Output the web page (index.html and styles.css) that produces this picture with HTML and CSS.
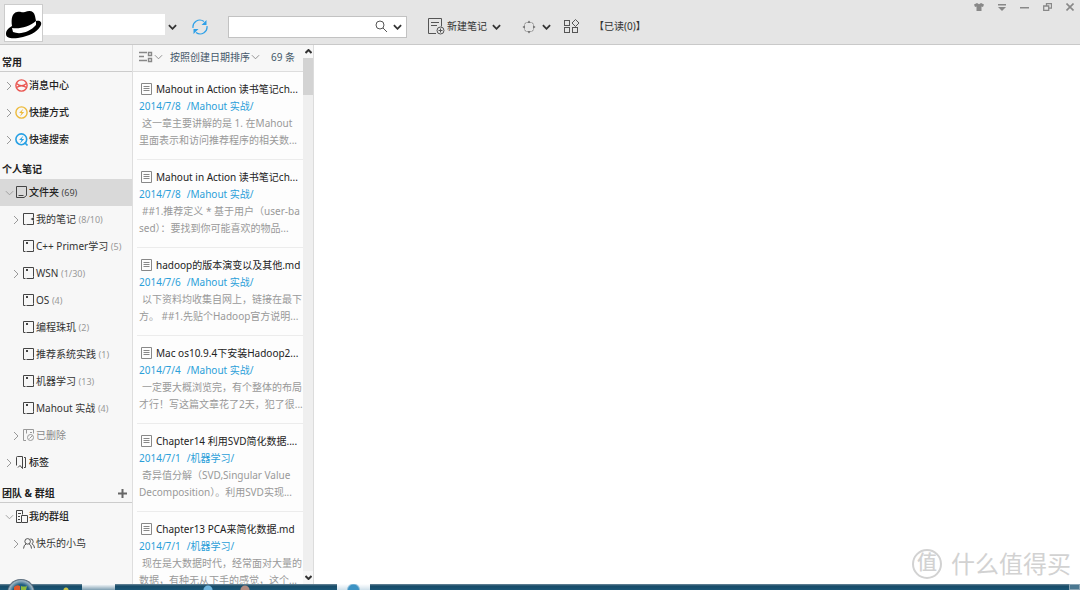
FILE: index.html
```html
<!DOCTYPE html>
<html lang="zh-CN">
<head>
<meta charset="utf-8">
<title>笔记</title>
<link rel="stylesheet" href="styles.css">
</head>
<body>
<svg class="sprite" aria-hidden="true">
  <symbol id="right" viewBox="0 0 6 10"><path d="M1 1l4 4-4 4"/></symbol>
  <symbol id="down" viewBox="0 0 10 6"><path d="M1 1l4 4 4-4"/></symbol>
  <symbol id="note" viewBox="0 0 12 13"><path d="M2.500 11.500H.5V.5h10v9M3.500 11.500h7v-2"/><path d="M3 2h2v2H3z" fill="#444" stroke="none"/></symbol>
  <symbol id="doc" viewBox="0 0 11 12"><path d="M.5.500h10v11H.5zM2.500 3.500h6M2.500 5.500h6M2.500 7.500h6"/></symbol>
</svg>
<div class="app">
  <header class="topbar">
    <div class="avatar">
      <svg width="36" height="36" viewBox="0 0 36 36"><path d="M6 20C5 13 6 7 11 6c4-1 4 1 8 0 5-2 9-1 10 4l1 5c4-1 6 1 5 4-2 5-9 10-18 12C8 33 0 33 0 28c0-4 3-6 6-8z" fill="#000"/><path d="M6 22c8 1 17-1 24-7v4c-6 7-16 10-23 7z" fill="#fff"/></svg>
    </div>
    <div class="username"></div>
    <button class="btn user-menu" aria-label="账户"><svg class="ico dark" width="9" height="6"><use href="#down"/></svg></button>
    <button class="btn sync" aria-label="同步">
      <svg width="16" height="16" viewBox="0 0 16 16" fill="none" stroke="#2ea0e8" stroke-width="1.200"><path d="M1 9a7 7 0 0 1 3-6.700A7 7 0 0 1 12 2.500M15 7a7 7 0 0 1-3 6.700A7 7 0 0 1 4 13.500"/><path d="M9.500 6h5V1zM6.500 10h-5v5z" fill="#2ea0e8" stroke="none"/></svg>
    </button>
    <form class="search">
      <input type="text" aria-label="搜索笔记">
      <button class="btn" type="button" aria-label="搜索"><svg class="ico mid" width="13" height="13" viewBox="0 0 13 13"><circle cx="5" cy="5" r="4"/><path d="M8 8l4 4"/></svg></button>
      <button class="btn" type="button" aria-label="搜索选项"><svg class="ico dark" width="9" height="6"><use href="#down"/></svg></button>
    </form>
    <button class="btn new-note">
      <svg class="ico mid" width="17" height="17" viewBox="0 0 17 17"><path d="M8 15.500H.5V.5h13v8M3 4.500h8M3 7.500h6"/><circle cx="12.500" cy="12.500" r="3.500"/><path d="M12.500 10.500v4M10.500 12.500h4"/></svg>
      <span>新建笔记</span>
      <svg class="ico dark caret" width="9" height="6"><use href="#down"/></svg>
    </button>
    <button class="btn focus" aria-label="视图">
      <svg class="ico gray" width="14" height="14" viewBox="0 0 14 14"><path d="M5 3L7 .5 9 3zM5 11l2 2.500L9 11zM3 5L.5 7 3 9zM11 5l2.500 2L11 9z" fill="#777" stroke="none"/><path d="M2.500 4.500q.5-1.500 2-2M9.500 2.500q1.500.5 2 2M2.500 9.500q.5 1.500 2 2M11.500 9.500q-.5 1.500-2 2"/></svg>
      <svg class="ico dark" width="9" height="6"><use href="#down"/></svg>
    </button>
    <button class="btn apps" aria-label="应用">
      <svg class="ico mid" width="16" height="15" viewBox="0 0 16 15"><rect x=".5" y="1.500" width="5" height="5"/><rect x=".5" y="8.500" width="5" height="5"/><rect x="8.500" y="8.500" width="5" height="5"/><path d="M11.500.500l3.500 3.500-3.500 3.500L8 4z"/></svg>
    </button>
    <button class="btn read">【已读(0)】</button>
    <div class="window-controls">
      <button class="btn" aria-label="皮肤"><svg width="10" height="8" viewBox="0 0 10 8"><path d="M0 1.500L3 0l2 1.200L7 0l3 1.500-1 2.500-1.500-.5V8h-5V3.500L1 4z" fill="#888"/></svg></button>
      <button class="btn" aria-label="菜单"><svg width="8" height="7" viewBox="0 0 8 7"><path d="M0 0h8v1.500H0zM0 3h8L4 7z" fill="#888"/></svg></button>
      <button class="btn" aria-label="最小化"><svg width="9" height="7" viewBox="0 0 9 7"><path d="M0 3h9v1.500H0z" fill="#888"/></svg></button>
      <button class="btn" aria-label="还原"><svg width="9" height="8" viewBox="0 0 9 8" fill="none" stroke="#888" stroke-width="1.300"><path d="M3.500 2.500V.7h5v4.500H6M.7 3h5v4.300h-5z"/></svg></button>
      <button class="btn" aria-label="关闭"><svg width="8" height="8" viewBox="0 0 8 8" stroke="#888" stroke-width="1.600"><path d="M.5.500l7 7M7.500.500l-7 7"/></svg></button>
    </div>
  </header>

  <div class="body">
    <nav class="sidebar">
      <h2 class="group ruled">常用</h2>
      <a class="row strong" href="#"><svg class="ico arrow"><use href="#right"/></svg><svg class="badge" viewBox="0 0 13 13" fill="none" stroke="#ea5550" stroke-width="1.400"><circle cx="6.500" cy="6.500" r="5.600"/><path d="M1.500 4.500q5 4.500 10 0M1.500 8.500q5-3.500 10 0"/></svg><span>消息中心</span></a>
      <a class="row strong" href="#"><svg class="ico arrow"><use href="#right"/></svg><svg class="badge" viewBox="0 0 13 13" fill="none" stroke="#edba3b" stroke-width="1.400"><circle cx="6.500" cy="6.500" r="5.600"/><path d="M8.500 2.500L4 7h2.500l-1.500 3.500L9.200 6H6.700z" fill="#edba3b" stroke="none"/></svg><span>快捷方式</span></a>
      <a class="row strong" href="#"><svg class="ico arrow"><use href="#right"/></svg><svg class="badge" viewBox="0 0 13 13" fill="none" stroke="#27a0e4" stroke-width="1.600"><circle cx="6.300" cy="6.300" r="5.400"/><path d="M9.500 9.500l3 3"/><path d="M8.500 2.500L4 7h2.500l-1.500 3.500L9.200 6H6.700z" fill="#27a0e4" stroke="none"/></svg><span>快速搜索</span></a>
      <h2 class="group">个人笔记</h2>
      <a class="row strong selected" href="#"><svg class="ico fold"><use href="#down"/></svg><svg class="ico badge" viewBox="0 0 13 13"><path d="M1.500.500h10v9l-2.500 2H1.500zM3.500 9.500h5"/></svg><span>文件夹 <small>(69)</small></span></a>
      <a class="row child" href="#"><svg class="ico arrow"><use href="#right"/></svg><svg class="ico folder" viewBox="0 0 12 13"><path d="M10.500 4V.5H.5v11h2M3.500 11.500h7V8"/><path d="M11 4v4L7.500 6z" fill="#444" stroke="none"/></svg><span>我的笔记 <small>(8/10)</small></span></a>
      <a class="row child leaf" href="#"><svg class="ico folder"><use href="#note"/></svg><span>C++ Primer学习 <small>(5)</small></span></a>
      <a class="row child" href="#"><svg class="ico arrow"><use href="#right"/></svg><svg class="ico folder"><use href="#note"/></svg><span>WSN <small>(1/30)</small></span></a>
      <a class="row child leaf" href="#"><svg class="ico folder"><use href="#note"/></svg><span>OS <small>(4)</small></span></a>
      <a class="row child leaf" href="#"><svg class="ico folder"><use href="#note"/></svg><span>编程珠玑 <small>(2)</small></span></a>
      <a class="row child leaf" href="#"><svg class="ico folder"><use href="#note"/></svg><span>推荐系统实践 <small>(1)</small></span></a>
      <a class="row child leaf" href="#"><svg class="ico folder"><use href="#note"/></svg><span>机器学习 <small>(13)</small></span></a>
      <a class="row child leaf" href="#"><svg class="ico folder"><use href="#note"/></svg><span>Mahout 实战 <small>(4)</small></span></a>
      <a class="row child muted" href="#"><svg class="ico arrow"><use href="#right"/></svg><svg class="ico folder" viewBox="0 0 12 13"><path d="M3 11.500H.5V.5h10v4M3.500 1v3.500M7 3.500h2"/><circle cx="7.500" cy="8.500" r="3"/><path d="M6.500 9.500l3-3"/></svg><span>已删除</span></a>
      <a class="row strong" href="#"><svg class="ico arrow"><use href="#right"/></svg><svg class="ico badge" viewBox="0 0 13 13"><path d="M1.500 9.500v-8q0-1 1-1h5v12L5 9.500l-2 2M9 1.500h1.500v10H9"/></svg><span>标签</span></a>
      <h2 class="group ruled">团队 &amp; 群组<button class="btn add" aria-label="添加群组"><svg width="9" height="9" viewBox="0 0 9 9" stroke="#666" stroke-width="2"><path d="M4.500 0v9M0 4.500h9"/></svg></button></h2>
      <a class="row strong" href="#"><svg class="ico fold"><use href="#down"/></svg><svg class="ico badge" viewBox="0 0 13 13"><path d="M6 12.500H1.500V.5h6v4M3 3.500h3M3 6.500h2M3 9.500h2M6.500 5.500h6v7h-6z"/></svg><span>我的群组</span></a>
      <a class="row child" href="#"><svg class="ico arrow"><use href="#right"/></svg><svg class="ico folder person" viewBox="0 0 13 12"><circle cx="5" cy="3.700" r="3"/><path d="M.6 11.500q.2-4 2.800-5M9.200 11.500q0-4-2.600-5M8 1q3 0 3 2.800 0 1.700-1.300 2.500 2.500 1 2.800 4.700"/></svg><span>快乐的小鸟</span></a>
    </nav>

    <section class="notes">
      <div class="list">
        <div class="sortbar">
          <button class="btn" aria-label="列表样式"><svg class="ico gray layout" width="14" height="12" viewBox="0 0 14 12"><path d="M0 1.500h8M0 5.500h5M0 9.500h8M9.500 1.500h3v3h-3zM9.500 7.500h3v3h-3z"/></svg><svg class="ico gray" width="9" height="6"><use href="#down"/></svg></button>
          <button class="btn sort">按照创建日期排序<svg class="ico gray" width="9" height="6"><use href="#down"/></svg></button>
          <span class="count">69 条</span>
        </div>
        <div class="items">
          <article class="item"><h3><svg class="ico gray"><use href="#doc"/></svg>Mahout in Action 读书笔记ch...</h3><p class="meta"><time>2014/7/8</time><a href="#">/Mahout 实战/</a></p><p class="text">这一章主要讲解的是 1. 在Mahout<br>里面表示和访问推荐程序的相关数...</p></article>
          <article class="item"><h3><svg class="ico gray"><use href="#doc"/></svg>Mahout in Action 读书笔记ch...</h3><p class="meta"><time>2014/7/8</time><a href="#">/Mahout 实战/</a></p><p class="text">##1.推荐定义 * 基于用户（user-ba<br>sed）：要找到你可能喜欢的物品...</p></article>
          <article class="item"><h3><svg class="ico gray"><use href="#doc"/></svg>hadoop的版本演变以及其他.md</h3><p class="meta"><time>2014/7/6</time><a href="#">/Mahout 实战/</a></p><p class="text">以下资料均收集自网上，链接在最下<br>方。 ##1.先贴个Hadoop官方说明...</p></article>
          <article class="item"><h3><svg class="ico gray"><use href="#doc"/></svg>Mac os10.9.4下安装Hadoop2...</h3><p class="meta"><time>2014/7/4</time><a href="#">/Mahout 实战/</a></p><p class="text">一定要大概浏览完，有个整体的布局<br>才行！写这篇文章花了2天，犯了很...</p></article>
          <article class="item"><h3><svg class="ico gray"><use href="#doc"/></svg>Chapter14 利用SVD简化数据....</h3><p class="meta"><time>2014/7/1</time><a href="#">/机器学习/</a></p><p class="text">奇异值分解（SVD,Singular Value<br>Decomposition）。利用SVD实现...</p></article>
          <article class="item"><h3><svg class="ico gray"><use href="#doc"/></svg>Chapter13 PCA来简化数据.md</h3><p class="meta"><time>2014/7/1</time><a href="#">/机器学习/</a></p><p class="text">现在是大数据时代，经常面对大量的<br>数据，有种无从下手的感觉，这个...</p></article>
        </div>
      </div>
      <div class="scrollbar">
        <button class="btn" aria-label="向上滚动"><svg class="ico dark" width="7" height="5" viewBox="0 0 7 5"><path d="M.5 4l3-3 3 3"/></svg></button>
        <div class="track"><div class="thumb"></div></div>
        <button class="btn" aria-label="向下滚动"><svg class="ico dark" width="7" height="5" viewBox="0 0 7 5"><path d="M.5 1l3 3 3-3"/></svg></button>
      </div>
    </section>

    <main class="content"></main>
    <div class="watermark"><span class="seal">值</span><span>什么值得买</span></div>
  </div>

  <footer class="taskbar">
    <svg class="orb" width="30" height="11" viewBox="0 0 30 11"><defs><radialGradient id="glass" cx=".5" cy=".5" r=".5"><stop offset=".6" stop-color="#1f5d80"/><stop offset=".88" stop-color="#9bb5c5"/><stop offset="1" stop-color="#456"/></radialGradient></defs><circle cx="15" cy="14" r="14" fill="url(#glass)"/><path d="M8 11V8q3-3 6-1v4z" fill="#e2572b"/><path d="M15 11V7q3 1 6 0l-1 4z" fill="#8dbb3c"/></svg>
    <span class="task"></span><span class="task second"></span><span class="desktop"></span>
  </footer>
</div>
</body>
</html>
```

FILE: styles.css
```css
* { box-sizing: border-box; }

body {
  margin: 0;
  font: 10px/17px "Noto Sans", "Noto Sans CJK SC", sans-serif;
  color: #333;
}

h2, h3, p { margin: 0; font-size: 10px; }
a { color: inherit; text-decoration: none; }
svg { flex: none; }
.sprite { position: absolute; width: 0; height: 0; }

.btn {
  display: flex;
  align-items: center;
  padding: 0;
  border: 0;
  background: none;
  color: inherit;
  font: inherit;
  white-space: nowrap;
}

.ico { fill: none; stroke: #444; stroke-width: 1; }
.ico.dark { stroke: #333; stroke-width: 2; }
.ico.mid { stroke: #555; }
.ico.gray { stroke: #888; }

.app { display: flex; flex-direction: column; height: 100vh; }

/* Top bar */
.topbar {
  display: flex;
  align-items: center;
  flex: none;
  height: 45px;
  padding: 9px 0 0 4px;
  background: #e5e5e5;
  border-bottom: 1px solid #c9c9c9;
}
.avatar {
  display: flex;
  width: 39px;
  height: 38px;
  margin-top: -8px;
  padding: 1px;
  background: #fff;
  border: 1px solid #ccc;
}
.username { width: 122px; height: 21px; margin-top: -4px; background: #fff; }
.user-menu { margin-left: 3px; }
.sync { margin-left: 15px; }
.search {
  display: flex;
  align-items: center;
  gap: 5px;
  width: 179px;
  height: 22px;
  margin-left: 20px;
  padding-right: 4px;
  background: #fff;
  border: 1px solid #c2c2c2;
}
.search input { flex: 1; min-width: 0; height: 100%; border: 0; background: none; outline: 0; font: inherit; }
.new-note { margin-left: 21px; gap: 2px; }
.caret { margin-left: 3px; }
.focus { margin-left: 21px; gap: 6px; }
.apps { margin-left: 13px; }
.read { margin-left: 14px; }
.window-controls { display: flex; align-self: flex-start; gap: 14px; margin: -6px 6px 0 auto; }

/* Columns */
.body { position: relative; display: flex; flex: 1; min-height: 0; }

.sidebar { flex: none; width: 133px; background: #f7f7f7; border-right: 1px solid #dedede; overflow: hidden; }
.group {
  display: flex;
  align-items: center;
  justify-content: space-between;
  height: 26px;
  padding: 6px 5px 0 2px;
  color: #222;
}
.group.ruled { height: 27px; padding-top: 8px; border-bottom: 1px solid #ccc; }
.row { display: flex; align-items: center; height: 27px; padding-left: 6px; white-space: nowrap; }
.row small { font-size: 9px; color: #999; font-weight: 400; }
.strong { color: #222; font-weight: 500; }
.selected { background: #d9d9d9; }
.selected small { color: #444; }
.arrow { width: 6px; height: 10px; margin-right: 3px; stroke: #999; }
.fold { width: 9px; height: 6px; margin-left: -1px; margin-right: 1px; stroke: #999; }
.badge { width: 13px; height: 13px; margin-right: 1px; }
.child { padding-left: 13px; }
.child.leaf { padding-left: 23px; }
.child .arrow { margin-right: 4px; }
.folder { width: 12px; height: 13px; margin-right: 1px; }
.muted { color: #888; }
.muted .folder { stroke: #999; }

/* Note list */
.notes { display: flex; flex: none; width: 181px; border-right: 1px solid #dcdcdc; }
.list { display: flex; flex-direction: column; flex: 1; min-width: 0; overflow: hidden; }
.sortbar {
  display: flex;
  align-items: center;
  flex: none;
  height: 27px;
  padding: 0 8px 2px 6px;
  background: #f7f7f7;
  border-bottom: 1px solid #ddd;
  color: #46586a;
}
.sortbar .btn { gap: 1px; }
.sortbar .sort { margin-left: 7px; }
.layout { stroke-width: 1.4; }
.count { margin-left: auto; white-space: nowrap; }
.items { flex: 1; min-height: 0; overflow: hidden; padding-left: 4px; background: #fdfdfd; }
.item { padding: 8px 0 10px 2px; border-bottom: 1px solid #ececec; white-space: nowrap; }
.item h3 { display: flex; align-items: center; height: 18px; color: #222; font-weight: 400; }
.item h3 svg { width: 11px; height: 12px; margin: 0 4px 0 2px; }
.meta { display: flex; gap: 6px; color: #2b9fd9; }
.text { color: #999; text-indent: 3px; }

.scrollbar { display: flex; flex-direction: column; flex: none; width: 10px; background: #efefef; }
.scrollbar .btn { justify-content: center; height: 13px; background: #f7f7f7; }
.track { flex: 1; }
.thumb { height: 37px; background: #d3d3d3; }

.content { flex: 1; background: #fff; }

.watermark {
  position: absolute;
  right: 9px;
  bottom: 4px;
  display: flex;
  align-items: center;
  gap: 9px;
  font-size: 24px;
  line-height: 32px;
  color: #d2d2d2;
}
.seal { width: 30px; height: 30px; border: 2px solid #d2d2d2; border-radius: 50%; font-size: 20px; line-height: 24px; text-align: center; font-weight: 500; }

/* Desktop taskbar */
.taskbar {
  position: relative;
  display: flex;
  flex: none;
  height: 6px;
  background:
    radial-gradient(circle at 66px 6px, #c9c34a 2px, transparent 3px),
    radial-gradient(circle at 208px 6px, #6fb4dc 4px, transparent 5px),
    radial-gradient(circle at 245px 6px, #b08a80 4px, transparent 5px),
    linear-gradient(#6f8b9c, #174b68 2px, #1b5676);
}
.orb { position: absolute; left: 6px; bottom: 0; }
.task { width: 33px; margin-left: 82px; background: linear-gradient(#fff, #7f9fb2); }
.task.second { margin-left: 222px; background: radial-gradient(circle at 50% 100%, #3d93c4 5px, transparent 7px), linear-gradient(#fff, #cfe0ea); }
.desktop { width: 11px; margin-left: auto; border: 1px solid #8aa5b5; background: #4b7891; }
```
